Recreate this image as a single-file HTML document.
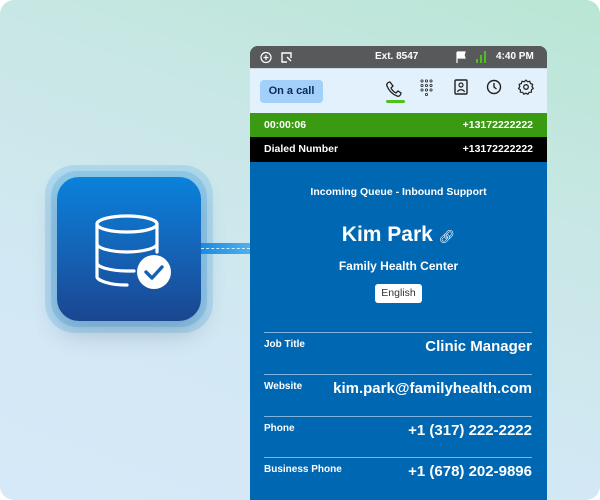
<!DOCTYPE html>
<html><head><meta charset="utf-8"><style>
*{margin:0;padding:0;box-sizing:border-box}
html,body{width:600px;height:500px;background:#fff;overflow:hidden;font-family:"Liberation Sans",sans-serif}
.bg{position:absolute;left:0;top:0;width:600px;height:500px;border-radius:14px;background:linear-gradient(200deg,#b9e6d4 0%,#c9e7e6 35%,#d3e8f5 70%,#d6e9f8 100%);overflow:hidden}
.glow{position:absolute;left:45px;top:165px;width:168px;height:168px;border-radius:30px;background:rgba(130,195,235,.4)}
.glow2{position:absolute;left:51px;top:171px;width:156px;height:156px;border-radius:26px;background:rgba(100,180,230,.4)}
.box{position:absolute;left:57px;top:177px;width:144px;height:144px;border-radius:22px;background:linear-gradient(180deg,#0a82db 0%,#1464b8 50%,#1b4690 100%);box-shadow:0 12px 24px rgba(30,60,100,.25)}
.conn{position:absolute;left:201px;top:243px;width:49px;height:11px;background:linear-gradient(90deg,#1a8ae0,#4fb0ee)}
.conn i{position:absolute;left:0;right:0;top:5px;border-top:1px dashed rgba(255,255,255,.8)}
.panel{position:absolute;left:250px;top:46px;width:297px;height:460px;border-radius:8px 8px 0 0;overflow:hidden;background:#0067b3}
.top{height:22px;background:#58595b;color:#fff;font-size:10px;font-weight:bold;position:relative}
.top span{position:absolute;top:5px}
.tool{height:45px;background:#e3f1fd;position:relative;border-top:1px solid #c9d9e6}
.btn{position:absolute;left:10px;top:11px;width:63px;height:23px;border-radius:4px;background:#a3d0fa;color:#0a2a5a;font-size:11px;font-weight:bold;text-align:center;line-height:23px}
.green{height:24px;background:#3a9b12;color:#fff;font-size:10.5px;font-weight:bold;position:relative}
.black{height:25px;background:#000;color:#fff;font-size:10.5px;font-weight:bold;position:relative}
.green span,.black span{position:absolute;top:6px}
.c{text-align:center;color:#fff;font-weight:bold;position:absolute;left:0;width:297px}
.row{position:absolute;left:14px;width:268px;border-top:1.5px solid #7fb3dd;color:#fff;font-weight:bold}
.row .l{position:absolute;left:0;top:6px;font-size:10px}
.row .v{position:absolute;right:0;top:5px;font-size:15px}
</style></head><body>
<div class="bg">
<div class="glow"></div><div class="glow2"></div>
<div class="box"></div>
<svg style="position:absolute;left:0;top:0" width="600" height="500">
<g fill="none" stroke="#fff" stroke-width="3.2" stroke-linecap="round">
<ellipse cx="127" cy="224" rx="30" ry="8"/>
<path d="M97 224V277c0 3 12 8 28 8h2"/>
<path d="M157 224V252"/>
<path d="M97 244c0 4 14 8 30 8s30-4 30-8"/>
<path d="M97 263c0 4 14 8 30 8h7"/>
</g>
<circle cx="154" cy="272" r="17" fill="#fff"/>
<path d="M146 272l6 6 10-11" fill="none" stroke="#1860b0" stroke-width="3.4" stroke-linecap="round" stroke-linejoin="round"/>
</svg>
<div class="conn"><i></i></div>
<div class="panel">
<div class="top">
<svg style="position:absolute;left:10px;top:5px" width="36" height="13"><circle cx="6" cy="6.5" r="5" fill="none" stroke="#fff" stroke-width="1.2"/><path d="M6 4v5M3.5 6.5h5" stroke="#fff" stroke-width="1.2"/><path d="M27 11h-5V2h9v5" fill="none" stroke="#fff" stroke-width="1.4"/><path d="M27 6l4 4" stroke="#fff" stroke-width="1.4"/></svg>
<span style="left:125px">Ext. 8547</span>
<svg style="position:absolute;left:206px;top:5px" width="32" height="13"><path d="M1 1v11M1 1h8l-1 3 1 3H1" fill="#fff" stroke="#fff" stroke-width="1.2"/><rect x="20" y="8" width="2" height="4" fill="#4fc21a"/><rect x="24" y="4" width="2" height="8" fill="#4fc21a"/><rect x="28" y="0" width="2" height="12" fill="#4fc21a"/></svg>
<span style="left:246px">4:40 PM</span>
</div>
<div class="tool">
<div class="btn">On a call</div>
<svg style="position:absolute;left:130px;top:8px" width="160" height="28">
<path d="M10 5c-2 0-4 2-3 4 2 5 5 8 10 10 2 1 4-1 4-3l-3-2-2 2c-2-1-4-3-5-5l2-2z" fill="none" stroke="#222" stroke-width="1.3"/>
<rect x="6" y="23" width="19" height="3" rx="1.5" fill="#4fc21a"/>
<g fill="none" stroke="#222" stroke-width=".8"><circle cx="42" cy="4" r="1.1"/><circle cx="46.5" cy="4" r="1.1"/><circle cx="51" cy="4" r="1.1"/><circle cx="42" cy="8.5" r="1.1"/><circle cx="46.5" cy="8.5" r="1.1"/><circle cx="51" cy="8.5" r="1.1"/><circle cx="42" cy="13" r="1.1"/><circle cx="46.5" cy="13" r="1.1"/><circle cx="51" cy="13" r="1.1"/><circle cx="46.5" cy="17.5" r="1.1"/></g>
<rect x="75" y="3" width="12" height="14" rx="1" fill="none" stroke="#222" stroke-width="1.4"/>
<circle cx="81" cy="8" r="2" fill="none" stroke="#222" stroke-width="1.2"/><path d="M77.5 15c1-3 6-3 7 0" fill="none" stroke="#222" stroke-width="1.2"/>
<circle cx="114" cy="10" r="6.5" fill="none" stroke="#222" stroke-width="1.4"/><path d="M114 6v4l2.5 2" fill="none" stroke="#222" stroke-width="1.4"/>
<circle cx="146" cy="10" r="2.3" fill="none" stroke="#222" stroke-width="1.3"/>
<path d="M146 3l1.5 1.8 2.3-.6.6 2.3 2.3.8-.7 2.3 1.3 1.9-1.9 1.3.1 2.4-2.4.1-1.2 2-2-1.2-2 1.2-1.2-2-2.4-.1.1-2.4-1.9-1.3 1.3-1.9-.7-2.3 2.3-.8.6-2.3 2.3.6z" fill="none" stroke="#222" stroke-width="1.2" stroke-linejoin="round"/>
</svg>
</div>
<div class="green"><span style="left:14px">00:00:06</span><span style="right:14px">+13172222222</span></div>
<div class="black"><span style="left:14px">Dialed Number</span><span style="right:14px">+13172222222</span></div>
<div class="c" style="top:140px;font-size:10.5px">Incoming Queue - Inbound Support</div>
<div class="c" style="top:177px;font-size:21px">Kim Park <span style="font-size:13px;font-weight:normal">&#x1F517;&#xFE0E;</span></div>
<div class="c" style="top:213px;font-size:12px">Family Health Center</div>
<div style="position:absolute;left:125px;top:238px;width:47px;height:19px;background:#fff;border-radius:3px;color:#333;font-size:10.5px;text-align:center;line-height:19px">English</div>
<div class="row" style="top:286px"><span class="l">Job Title</span><span class="v">Clinic Manager</span></div>
<div class="row" style="top:328px"><span class="l">Website</span><span class="v">kim.park@familyhealth.com</span></div>
<div class="row" style="top:370px"><span class="l">Phone</span><span class="v">+1 (317) 222-2222</span></div>
<div class="row" style="top:411px"><span class="l">Business Phone</span><span class="v">+1 (678) 202-9896</span></div>
</div>
</div>
</body></html>
